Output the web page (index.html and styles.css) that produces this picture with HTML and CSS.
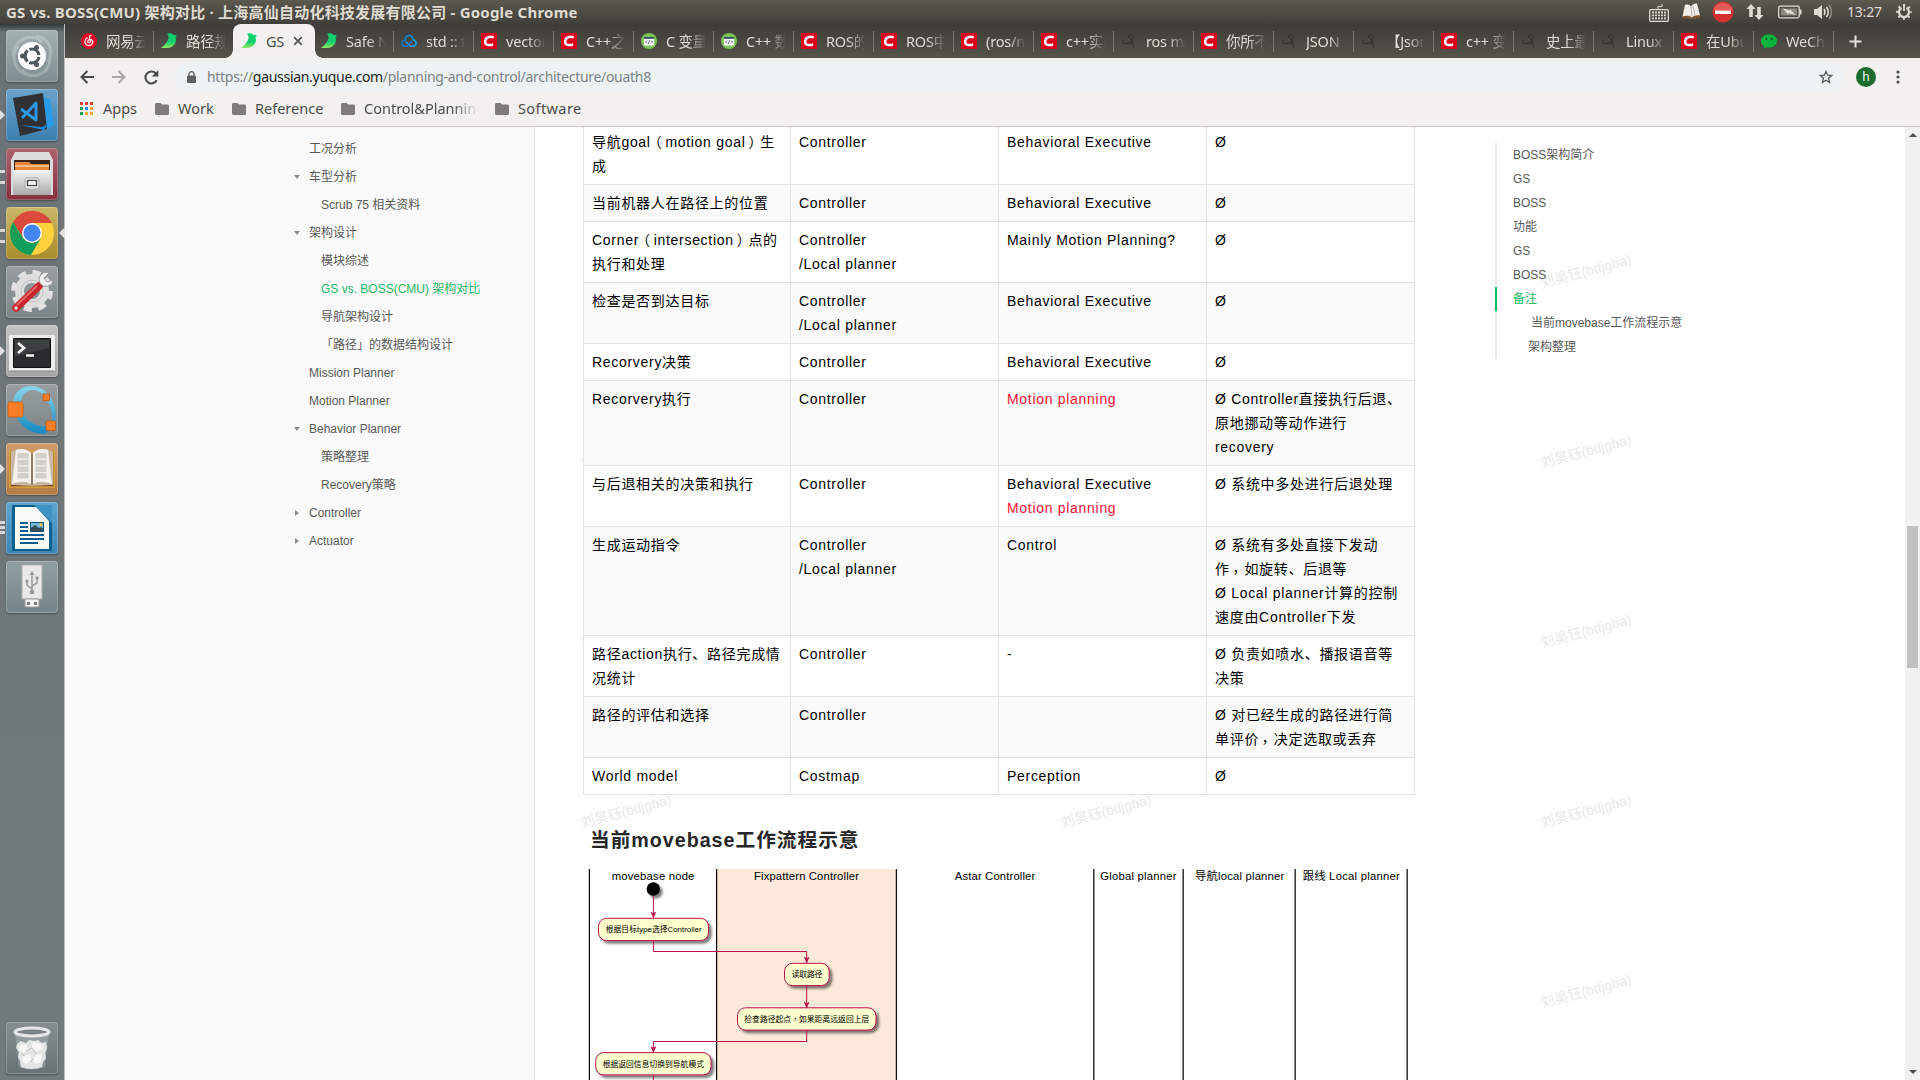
FILE: index.html
```html
<!DOCTYPE html>
<html lang="zh-CN">
<head>
<meta charset="utf-8">
<title>GS vs. BOSS(CMU) 架构对比</title>
<link rel="stylesheet" href="styles.css">
</head>
<body>
<svg class="defs" width="0" height="0">
  <defs>
    <linearGradient id="bird-g" x1="0" y1="0" x2="0" y2="1"><stop offset="0" stop-color="#0bd070"/><stop offset=".6" stop-color="#16cf6e"/><stop offset="1" stop-color="#9ce86a"/></linearGradient>
    <linearGradient id="metal" x1="0" y1="0" x2="0" y2="1"><stop offset="0" stop-color="#f4f4f4"/><stop offset="1" stop-color="#aaa"/></linearGradient>
    <linearGradient id="ring" x1="0" y1="0" x2="0" y2="1"><stop offset="0" stop-color="#8bd6ee"/><stop offset="1" stop-color="#1389c4"/></linearGradient>
    <symbol id="f-bird" viewBox="0 0 16 16"><path fill="url(#bird-g)" d="M6 1C8-.4 11 0 12 1.800l3.800.4-1.300 2.300c1.500 4-1 8.700-5.200 9.900-3 .8-6.300.6-9.300.6C3.500 12 7 8.500 7.600 5 7.800 3.300 7.200 2 6 1z"/></symbol>
    <symbol id="f-netease" viewBox="0 0 16 16"><circle cx="8" cy="8" r="8" fill="#e60026"/><path d="M9.800 2.700C8.500 2.400 8.400 3.500 8.600 4.500l.7 3.600c.3 2-2.500 2.200-2.500.3 0-2 3-2.700 4.400-1 1.700 2.300-.4 5.200-3.200 5.200-2.700 0-4.300-2-4.100-4.300C4 6.500 5 5.400 6.200 4.800" fill="none" stroke="#fff" stroke-width="1.200" stroke-linecap="round"/></symbol>
    <symbol id="f-cloud" viewBox="0 0 16 16"><g fill="none" stroke-width="1.500"><path d="M4.200 7.300C3.700 1.200 12 1 12 7" stroke="#0b8fe8"/><path d="M12 7c4.300.2 4 6.300 0 6.300H9.500L4.800 8.500" stroke="#0aa0f0"/><path d="M4.200 7.300c-4.500.3-4.300 6 0 6h2l5-5.600" stroke="#0a74c8"/></g></symbol>
    <symbol id="f-c" viewBox="0 0 16 16"><path fill="#e0001b" d="M0 0h16v16H0z"/><path d="M12.800 4.300C9 3 4.200 4 4.100 8.600c0 3.700 4.200 4.100 8 2.900" fill="none" stroke="#fff" stroke-width="2.500"/></symbol>
    <symbol id="f-code" viewBox="0 0 16 16"><circle cx="8" cy="8" r="8" fill="#78c257"/><rect x="3" y="4" width="10" height="8.500" rx="1" fill="#fff"/><path fill="#34495e" d="M3 4h10v1.800H3z"/><path d="M6 7.500 4.500 9 6 10.500M10 7.500 11.500 9 10 10.500M8.600 7.300 7.400 10.800" fill="none" stroke="#456" stroke-width=".9"/></symbol>
    <symbol id="f-dark" viewBox="0 0 16 16"><path d="M1.500 6c-1 5 4 5.500 7 3.500 3-2 4.500-6 2.500-8-2-1-4 1.500-2.500 3.500 3 2.500 4 4 4 10M8 9.500c2 1.500 3 0 4 .5" fill="none" stroke="#3a3733" stroke-width="1.200"/></symbol>
    <symbol id="f-wechat" viewBox="0 0 16 16"><path fill="#07b53b" d="M8 1.200c4.600 0 8 2.900 8 6.700s-3.400 6.600-8 6.600c-.9 0-1.700-.1-2.400-.3L2.700 15.800l.6-2.700C1.200 11.900 0 10 0 7.900c0-3.800 3.400-6.700 8-6.700z"/><circle cx="5.300" cy="5.800" r="1.100" fill="#14502a"/><circle cx="10.700" cy="5.800" r="1.100" fill="#14502a"/></symbol>
    <symbol id="folder" viewBox="0 0 14 12"><path fill="#7d7c7b" d="M1.500 0h4l1.600 1.600h5.400c.8 0 1.500.6 1.500 1.400v7.500c0 .8-.7 1.500-1.500 1.500h-11C.7 12 0 11.300 0 10.500v-9C0 .7.700 0 1.500 0z"/></symbol>
  </defs>
</svg>

<header class="titlebar">
  <span class="window-title">GS vs. BOSS(CMU) 架构对比 · 上海高仙自动化科技发展有限公司 - Google Chrome</span>
  <div class="tray">
    <svg class="t-kbd" width="20" height="24" viewBox="0 0 20 24"><path d="M9 9V6.500h4V4" fill="none" stroke="#dfdbd2"/><rect x=".7" y="9.700" width="18.600" height="11.600" rx="1" fill="#4a4843" stroke="#dfdbd2" stroke-width="1.300"/><path d="M3 12.500h14M3 15.300h14M3 18.300h14" stroke="#dfdbd2" stroke-width="1.800" stroke-dasharray="2 1"/></svg>
    <svg class="t-book" width="20" height="18" viewBox="0 0 20 18"><path d="M1 15 3 3l14 1 2 11-8 1z" fill="#80552e"/><path d="M1.500 13.500 4 2c3-1 5 0 6 1.500C11.500 1 14 0 16 .5l3 12c-3-.5-6 0-8 2-2-2-6-2.500-9.500-1z" fill="#f0eee9"/><path d="M10 3.500 11 14M12 3l2 10" stroke="#bdb8b0"/></svg>
    <svg class="t-stop" width="22" height="22" viewBox="0 0 22 22"><circle cx="11" cy="11" r="10.500" fill="#d52f32"/><path d="M1.500 9a10 10 0 0 1 19 0z" fill="#ee7a6a" opacity=".6"/><path d="M3 9.500h16v3.500H3z" fill="#fff"/></svg>
    <svg class="t-net" width="18" height="18" viewBox="0 0 18 18"><path fill="#dfdbd2" d="M5 1l4.500 5H6.800v8H3.200V6H.5zM13 17l4.500-5h-2.700V4h-3.600v8H8.500z"/></svg>
    <svg class="t-bat" width="24" height="14" viewBox="0 0 24 14"><rect x=".7" y="1.200" width="20.500" height="11.600" rx="1.500" fill="none" stroke="#dfdbd2" stroke-width="1.300"/><path fill="#8b8982" d="M3 3.500h16v7H3z"/><path fill="#dfdbd2" d="M22 4.500h1.500v5H22zM5 3.500l7 2V4l5.500 6-7-2v2z"/></svg>
    <svg class="t-vol" width="19" height="16" viewBox="0 0 19 16"><path fill="#dfdbd2" d="M0 5h3l5-4v14l-5-4H0z"/><path d="M10 5q2 3 0 6M12.500 3q3.500 5 0 10" fill="none" stroke="#dfdbd2" stroke-width="1.500"/><path d="M15 1q5 7 0 14" fill="none" stroke="#96938b" stroke-width="1.300"/></svg>
    <span class="clock">13:27</span>
    <svg class="t-gear" width="16" height="18" viewBox="0 0 16 18"><g fill="none" stroke="#dfdbd2"><path d="M5.500 4.700a5 5 0 1 0 5 0" stroke-width="2.200"/><path d="M8 1v7" stroke-width="1.800"/><circle cx="8" cy="9" r="6.800" stroke-width="2" stroke-dasharray="2 3.340" stroke-dashoffset="1"/></g></svg>
  </div>
</header>

<div class="desktop">
  <nav class="launcher">
    <div class="tile t-ubuntu"><svg width="52" height="52" viewBox="0 0 52 52"><g fill="none" stroke="#fff" stroke-opacity=".22" stroke-width="3"><path d="M7 26C8 8 28 2 36 12M26 46C8 44 4 26 12 16M44 30C42 46 24 50 16 40M30 6c14 2 18 16 12 26"/></g><circle cx="26" cy="26" r="14" fill="#fff"/><circle cx="26" cy="26" r="7" fill="none" stroke="#4d565a" stroke-width="3.200" stroke-dasharray="12.600 2" stroke-dashoffset="-1"/><g fill="#4d565a"><circle cx="16.500" cy="26" r="2.500"/><circle cx="30.500" cy="17.500" r="2.500"/><circle cx="30.500" cy="34.500" r="2.500"/></g></svg></div>
    <div class="tile t-code run1"><svg width="52" height="52" viewBox="0 0 52 52"><path fill="#2a9be8" d="M35 8l9 2 4 26-6 4-6-4z"/><path fill="#303134" d="M7 9l30-5 4 36-27 7z"/><path fill="#1d86d6" d="M14 36l22 2 6-3-4 6z"/><path d="M15 20l15 11V14L16 29" fill="none" stroke="#2e95e0" stroke-width="3" stroke-linejoin="round"/></svg></div>
    <div class="tile t-files run2"><svg width="52" height="52" viewBox="0 0 52 52"><path fill="#dcdcdc" d="M9 4h34l4 8v35H5V12z"/><path fill="#3a2418" d="M8 12h36v11H8z"/><path fill="#e8873a" d="M9 14h14l2 2h18v8H9z"/><path d="M9 18h34" stroke="#fff3d0"/><path fill="url(#metal)" d="M7 22h38v25H7z"/><rect x="19" y="30" width="14" height="11" rx="2" fill="#e8e8e8" stroke="#aaa"/><rect x="21.500" y="32.500" width="9" height="5" fill="#fff" stroke="#444" stroke-width="1.300"/></svg></div>
    <div class="tile t-chrome run2 focus"><svg width="52" height="52" viewBox="0 0 52 52"><circle cx="26" cy="26" r="22" fill="#fdd23d"/><path fill="#dc4a3e" d="M26 26V16h20A22 22 0 0 0 7 15l10 16z"/><path fill="#109d58" d="M7 15a22 22 0 0 0 18 33l10-17-9 5-9-5z"/><circle cx="26" cy="26" r="10" fill="#fff"/><circle cx="26" cy="26" r="8.500" fill="#4285f4"/></svg></div>
    <div class="tile t-settings"><svg width="52" height="52" viewBox="0 0 52 52"><circle cx="26" cy="25" r="18.500" fill="none" stroke="#e2e2e2" stroke-width="5" stroke-dasharray="8 6.530"/><circle cx="26" cy="25" r="12.500" fill="none" stroke="#dedede" stroke-width="9"/><circle cx="26" cy="25" r="11" fill="none" stroke="#c2c2c2"/><path d="M36 19l5-5" stroke="#eee" stroke-width="6"/><path d="M10 42 33 20" stroke="#c8262c" stroke-width="7.500" stroke-linecap="round"/><path d="M11 39 31 20" stroke="#e86a68" stroke-width="2"/><path d="M43 7a7 7 0 1 0 4 7l-6 2-3-4z" fill="#f1f1f1" stroke="#999"/><circle cx="10" cy="42" r="1.700" fill="#fff"/></svg></div>
    <div class="tile t-term run1"><svg width="52" height="52" viewBox="0 0 52 52"><path fill="#ececec" d="M3 10h46v36H3z"/><path d="M3.500 46h45" stroke="#888"/><path fill="#282c2d" stroke="#111" d="M7.500 13.500h37v29h-37z"/><path fill="#4a4e4f" d="M9 15h34v8L9 31z" opacity=".6"/><path d="M12 18l6 5-6 5M20 30.500h8" fill="none" stroke="#f4f4f4" stroke-width="2.700"/></svg></div>
    <div class="tile t-octave"><svg width="52" height="52" viewBox="0 0 52 52"><path fill="url(#ring)" fill-rule="evenodd" d="M25 2C11 2 4 15 8 27c5 15 18 25 33 22l3-8C33 45 20 38 16 27 12 15 18 6 27 6c11 1 19 13 20 32h2C53 18 40 2 25 2z"/><g fill="#fb7e28" stroke="#c85a10" stroke-width=".8"><rect x="2" y="18" width="15" height="15" rx="1.500"/><rect x="37" y="10" width="6.500" height="6.500"/><rect x="40" y="37" width="9.500" height="9.500" rx="1"/></g></svg></div>
    <div class="tile t-reader run1"><svg width="52" height="52" viewBox="0 0 52 52"><path fill="#7c2b16" stroke="#d8a83c" stroke-width="1.500" d="M4 9h44v35H4z"/><path fill="#c9b8a4" d="M5 9l7-3 14 5 14-5 7 3v33l-21 1-21-1z"/><path fill="#f4f1ec" d="M10 7c6-2 12-1 16 4v31c-5-4-12-4-20-1zM42 7c-6-2-12-1-16 4v31c5-4 12-4 20-1z"/><path d="M26 11v31" stroke="#8f7d69" stroke-width="2"/><g stroke="#c9c6c2" stroke-opacity=".8"><path d="M17 10v26M35 10v26" stroke-width="11" stroke-dasharray="5.500 1.200"/></g></svg></div>
    <div class="tile t-writer run3"><svg width="52" height="52" viewBox="0 0 52 52"><path fill="#0a5d8f" d="M6 3h40v46H6z"/><path fill="#3f92c4" d="M28 3h18v18z"/><path fill="#fafafa" d="M9 5h21l13 14v28H9z"/><path d="M14 21h8M14 25h8M14 29h8M14 33h24M14 37h24M14 41h18" stroke="#0a5d8f" stroke-width="2"/><path fill="#75b9dc" stroke="#0a4d75" d="M24.500 20.500h13v9h-13z"/><path fill="#374b52" d="M25 29v-3l4-3 4 3 2-1 2 2v2z"/><circle cx="35" cy="22.500" r="1.500" fill="#f1c33a"/></svg></div>
    <div class="tile t-usb"><svg width="52" height="52" viewBox="0 0 52 52"><path fill="#e9e9e9" stroke="#b0b0b0" d="M16 4h20v34H16z"/><path fill="#f6f6f6" stroke="#999" d="M19 38h14v8H19z"/><path fill="#777" d="M21 41h3v3h-3zM28 41h3v3h-3z"/><g fill="none" stroke="#999" stroke-width="1.500"><path d="M26 13v17M26 28l-5-4v-4M26 25l5-3v-4"/></g><path fill="#999" d="M26 10l2.500 4h-5z"/><g fill="#999"><circle cx="26" cy="31" r="2.300"/><circle cx="21" cy="20" r="1.600"/><path d="M29.500 15.500h3v3h-3z"/></g></svg></div>
    <div class="tile t-trash"><svg width="52" height="52" viewBox="0 0 52 52"><path d="M9 10l4 35q13 5 26 0l4-35z" fill="#a3adaf" opacity=".6"/><path fill="#e3e5e4" d="M11 22l4-3 5 2 3-3 6 1 3-1 4 3 4-1 1 6-2 5 1 5-3 4-1 5q-10 4-21 0l-1-6-2-4 1-5-3-4z"/><g fill="#f7f7f6"><path d="M14 22l6 1 3 5-5 3-5-3zM27 20l7 2 3 5-6 2-5-3zM17 34l7-2 2 6-6 4-4-3zM30 33l6-1-1 8-6 2-2-5z"/></g><path d="M20 29l6-3 4 6M24 40l4-4M15 32l4 2" fill="none" stroke="#bcc1c1"/><ellipse cx="26" cy="10" rx="17" ry="4" fill="#7a8385" stroke="#e6e8e8" stroke-width="3"/></svg></div>
  </nav>

  <main class="browser">
    <div class="tabs">
      <div class="tab"><svg class="fav"><use href="#f-netease"/></svg><span>网易云音乐</span></div>
      <div class="tab nosep"><svg class="fav"><use href="#f-bird"/></svg><span>路径规划</span></div>
      <div class="tab active"><svg class="fav"><use href="#f-bird"/></svg><span>GS</span><svg class="close" width="10" height="10" viewBox="0 0 10 10"><path d="M1.200 1.200l7.600 7.600M8.800 1.200 1.200 8.800" stroke="#55554f" stroke-width="1.700"/></svg></div>
      <div class="tab"><svg class="fav"><use href="#f-bird"/></svg><span>Safe Navi</span></div>
      <div class="tab"><svg class="fav"><use href="#f-cloud"/></svg><span>std :: thr</span></div>
      <div class="tab"><svg class="fav"><use href="#f-c"/></svg><span>vector</span></div>
      <div class="tab"><svg class="fav"><use href="#f-c"/></svg><span>C++之</span></div>
      <div class="tab"><svg class="fav"><use href="#f-code"/></svg><span>C 变量类</span></div>
      <div class="tab"><svg class="fav"><use href="#f-code"/></svg><span>C++ 数据</span></div>
      <div class="tab"><svg class="fav"><use href="#f-c"/></svg><span>ROS的</span></div>
      <div class="tab"><svg class="fav"><use href="#f-c"/></svg><span>ROS中</span></div>
      <div class="tab"><svg class="fav"><use href="#f-c"/></svg><span>(ros/nav</span></div>
      <div class="tab"><svg class="fav"><use href="#f-c"/></svg><span>c++实现</span></div>
      <div class="tab"><svg class="fav"><use href="#f-dark"/></svg><span>ros mov</span></div>
      <div class="tab"><svg class="fav"><use href="#f-c"/></svg><span>你所不知</span></div>
      <div class="tab"><svg class="fav"><use href="#f-dark"/></svg><span>JSON</span></div>
      <div class="tab"><svg class="fav"><use href="#f-dark"/></svg><span>【Json】</span></div>
      <div class="tab"><svg class="fav"><use href="#f-c"/></svg><span>c++ 变量</span></div>
      <div class="tab"><svg class="fav"><use href="#f-dark"/></svg><span>史上最全</span></div>
      <div class="tab"><svg class="fav"><use href="#f-dark"/></svg><span>Linux下</span></div>
      <div class="tab"><svg class="fav"><use href="#f-c"/></svg><span>在Ubuntu</span></div>
      <div class="tab"><svg class="fav"><use href="#f-wechat"/></svg><span>WeChat</span></div>
      <svg class="newtab" width="13" height="13" viewBox="0 0 13 13"><path d="M6.500 .5v12M.5 6.500h12" stroke="#e4e2dc" stroke-width="2"/></svg>
    </div>

    <div class="toolbar">
      <svg width="14" height="14" viewBox="0 0 14 14"><path d="M14 7H1.500M7.500 1l-6 6 6 6" fill="none" stroke="#484848" stroke-width="2"/></svg>
      <svg width="14" height="14" viewBox="0 0 14 14"><path d="M0 7h12.500M6.500 1l6 6-6 6" fill="none" stroke="#a9a8a7" stroke-width="2"/></svg>
      <svg width="15" height="15" viewBox="0 0 15 15"><path d="M12.700 10.300A6 6 0 1 1 11.700 3.200L13.200 5" fill="none" stroke="#484848" stroke-width="2"/><path fill="#484848" d="M14.300 0v6.500H7.900z"/></svg>
      <div class="omnibox">
        <svg width="9" height="12" viewBox="0 0 9 12"><rect y="4.500" width="9" height="7.500" rx="1" fill="#5f6063"/><path d="M2 5V3.200a2.500 2.500 0 0 1 5 0V5" fill="none" stroke="#5f6063" stroke-width="1.300"/></svg>
        <span class="url">https://<b>gaussian.yuque.com</b>/planning-and-control/architecture/ouath8</span>
        <svg class="star" width="14" height="14" viewBox="0 0 14 14"><path d="M7 1.500l1.600 3.700 4 .4-3 2.700.9 4L7 10.200l-3.500 2.100.9-4-3-2.700 4-.4z" fill="none" stroke="#55585b" stroke-width="1.300"/></svg>
      </div>
      <span class="avatar">h</span>
      <svg width="4" height="14" viewBox="0 0 4 14"><g fill="#4a4a4a"><circle cx="2" cy="2" r="1.600"/><circle cx="2" cy="7" r="1.600"/><circle cx="2" cy="12" r="1.600"/></g></svg>
    </div>

    <div class="bookmarks">
      <svg class="apps" width="13" height="13" viewBox="0 0 13 13"><path fill="#ea4335" d="M0 0h3v3H0zM5 0h3v3H5zM10 0h3v3h-3z"/><path fill="#0f9d58" d="M0 5h3v3H0zM0 10h3v3H0z"/><path fill="#1a8cf0" d="M5 5h3v3H5z"/><path fill="#fba827" d="M10 5h3v3h-3zM5 10h3v3H5zM10 10h3v3h-3z"/></svg>
      <span class="bm b-apps">Apps</span>
      <svg class="fold"><use href="#folder"/></svg><span class="bm b-work">Work</span>
      <svg class="fold"><use href="#folder"/></svg><span class="bm b-ref">Reference</span>
      <svg class="fold"><use href="#folder"/></svg><span class="bm b-ctl">Control&amp;Planning</span>
      <svg class="fold"><use href="#folder"/></svg><span class="bm b-soft">Software</span>
    </div>

    <div class="page">
      <aside class="sidebar">
        <ul>
          <li>工况分析</li>
          <li class="open">车型分析</li>
          <li class="sub">Scrub 75 相关资料</li>
          <li class="open">架构设计</li>
          <li class="sub">模块综述</li>
          <li class="sub current">GS vs. BOSS(CMU) 架构对比</li>
          <li class="sub">导航架构设计</li>
          <li class="sub">「路径」的数据结构设计</li>
          <li>Mission Planner</li>
          <li>Motion Planner</li>
          <li class="open">Behavior Planner</li>
          <li class="sub">策略整理</li>
          <li class="sub">Recovery策略</li>
          <li class="closed">Controller</li>
          <li class="closed">Actuator</li>
        </ul>
      </aside>

      <section class="content">
        <div class="marks">
          <span></span><span></span><span>刘昊钰(bdjgba)</span>
          <span>刘昊钰(bdjgba)</span><span></span><span>刘昊钰(bdjgba)</span>
          <span>刘昊钰(bdjgba)</span><span></span><span>刘昊钰(bdjgba)</span>
          <span>刘昊钰(bdjgba)</span><span>刘昊钰(bdjgba)</span><span>刘昊钰(bdjgba)</span>
          <span></span><span></span><span>刘昊钰(bdjgba)</span>
        </div>
        <article>
          <table>
            <colgroup><col class="c1"><col><col><col></colgroup>
            <tr><td>导航goal<i class="tc lp" lang="zh-TW">（</i>motion goal<i class="tc rp" lang="zh-TW">）</i>生<br>成</td><td>Controller</td><td>Behavioral Executive</td><td>Ø</td></tr>
            <tr><td>当前机器人在路径上的位置</td><td>Controller</td><td>Behavioral Executive</td><td>Ø</td></tr>
            <tr><td>Corner<i class="tc lp" lang="zh-TW">（</i>intersection<i class="tc rp" lang="zh-TW">）</i>点的<br>执行和处理</td><td>Controller<br>/Local planner</td><td>Mainly Motion Planning?</td><td>Ø</td></tr>
            <tr><td>检查是否到达目标</td><td>Controller<br>/Local planner</td><td>Behavioral Executive</td><td>Ø</td></tr>
            <tr><td>Recorvery决策</td><td>Controller</td><td>Behavioral Executive</td><td>Ø</td></tr>
            <tr><td>Recorvery执行</td><td>Controller</td><td><em>Motion planning</em></td><td>Ø Controller直接执行后退、<br>原地挪动等动作进行<br>recovery</td></tr>
            <tr><td>与后退相关的决策和执行</td><td>Controller</td><td>Behavioral Executive<br><em>Motion planning</em></td><td>Ø 系统中多处进行后退处理</td></tr>
            <tr><td>生成运动指令</td><td>Controller<br>/Local planner</td><td>Control</td><td>Ø 系统有多处直接下发动<br>作<i class="tc comma" lang="zh-TW">，</i>如旋转、后退等<br>Ø Local planner计算的控制<br>速度由Controller下发</td></tr>
            <tr><td>路径action执行、路径完成情<br>况统计</td><td>Controller</td><td>-</td><td>Ø 负责如喷水、播报语音等<br>决策</td></tr>
            <tr><td>路径的评估和选择</td><td>Controller</td><td></td><td>Ø 对已经生成的路径进行简<br>单评价<i class="tc comma" lang="zh-TW">，</i>决定选取或丢弃</td></tr>
            <tr><td>World model</td><td>Costmap</td><td>Perception</td><td>Ø</td></tr>
          </table>
          <h3>当前movebase工作流程示意</h3>
          <svg class="flow" width="820" height="211" viewBox="588 869 820 211">
            <defs>
              <filter id="sh" x="-20%" y="-30%" width="150%" height="190%"><feDropShadow dx="2.700" dy="2.700" stdDeviation="1.300" flood-color="#000" flood-opacity=".5"/></filter>
              <marker id="ar" viewBox="0 0 6 7" refX="3" refY="6.500" markerWidth="6" markerHeight="7" markerUnits="userSpaceOnUse"><path fill="#b8124a" d="M0 0l3 1.800L6 0 3 7z"/></marker>
            </defs>
            <path fill="#fff" d="M588 869h820v211H588z"/>
            <path fill="#fde9d9" d="M716.700 869h179.600v211H716.700z"/>
            <g stroke="#111" stroke-width="1.300"><path d="M589.400 869v211M716.600 869v211M896.400 869v211M1093.800 869v211M1183.200 869v211M1295.200 869v211M1407.200 869v211"/></g>
            <g class="lane">
              <text x="611.700" y="880" textLength="82.700">movebase node</text>
              <text x="754" y="880" textLength="105">Fixpattern Controller</text>
              <text x="954.800" y="880" textLength="80.500">Astar Controller</text>
              <text x="1100.300" y="880" textLength="76.300">Global planner</text>
              <text x="1195" y="880" textLength="89.300">导航local planner</text>
              <text x="1302.700" y="880" textLength="97">跟线 Local planner</text>
            </g>
            <circle cx="653.300" cy="889" r="6.700" filter="url(#sh)"/>
            <g fill="#fefece" stroke="#b8124a" filter="url(#sh)">
              <rect x="598.500" y="918.300" width="110" height="22.300" rx="8"/>
              <rect x="784.500" y="963.300" width="44.700" height="22.300" rx="8"/>
              <rect x="737.500" y="1007.800" width="138.500" height="22.300" rx="8"/>
              <rect x="595.700" y="1052.600" width="115.300" height="22.300" rx="8"/>
            </g>
            <g fill="none" stroke="#b8124a">
              <path marker-end="url(#ar)" d="M653.400 896v22"/>
              <path marker-end="url(#ar)" d="M653.400 941v10.500h153.300V963"/>
              <path marker-end="url(#ar)" d="M806.700 986v22"/>
              <path marker-end="url(#ar)" d="M806.700 1030.500v11H653.400v11"/>
              <path d="M653.400 1075v6"/>
            </g>
            <g class="step">
              <text x="605.700" y="932" textLength="96">根据目标type选择Controller</text>
              <text x="791.700" y="977" textLength="30.700">读取路径</text>
              <text x="744.300" y="1022" textLength="125" class="tc" lang="zh-TW">检查路径起点，如果距离远返回上层</text>
              <text x="602.700" y="1067" textLength="101.300">根据返回信息切换到导航模式</text>
            </g>
          </svg>
        </article>
        <ul class="toc">
          <li>BOSS架构简介</li><li>GS</li><li>BOSS</li><li>功能</li><li>GS</li><li>BOSS</li>
          <li class="on">备注</li><li class="l3">当前movebase工作流程示意</li><li class="l2">架构整理</li>
        </ul>
      </section>

      <div class="scrollbar"><i class="up"></i><i class="thumb"></i><i class="down"></i></div>
    </div>
  </main>
</div>
</body>
</html>
```
FILE: styles.css
```css
* { box-sizing: border-box; }
body {
  margin: 0;
  width: 1920px;
  height: 1080px;
  overflow: hidden;
  display: flex;
  flex-direction: column;
  font-family: "Liberation Sans", "Noto Sans CJK SC", sans-serif;
}
svg { display: block; flex: none; }
ul { list-style: none; margin: 0; padding: 0; }
i, em { font-style: normal; }
.defs { position: absolute; }

/* full-width punctuation sits in the middle of its cell */
.tc { font-family: "Liberation Sans", "Noto Sans CJK TC", sans-serif; }
.lp, .rp, .comma { display: inline-block; line-height: 20px; }
.lp { transform: translateX(-3px); }
.rp { transform: translateX(3px); }
.comma { transform: translate(-1px, 3px); }

/* desktop panel */
.titlebar {
  height: 24px;
  flex: none;
  display: flex;
  align-items: center;
  justify-content: space-between;
  padding: 0 8px 0 6px;
  background: linear-gradient(#5d5b4f 0, #59574e 8%, #403f3a 100%);
  color: #dfdbd2;
  font-family: "Noto Sans", "Noto Sans CJK SC", sans-serif;
}
.window-title { font-size: 15px; font-weight: 700; line-height: 24px; letter-spacing: .22px; white-space: nowrap; }
.tray { display: flex; align-items: center; height: 24px; }
.t-book { margin-left: 12px; }
.t-stop { margin-left: 11px; }
.t-net { margin-left: 12px; }
.t-bat { margin-left: 14px; }
.t-vol { margin-left: 12px; }
.clock { width: 36px; margin: 0 13px 0 14px; font-size: 14px; line-height: 24px; white-space: nowrap; letter-spacing: -.2px; }

.desktop { flex: 1; min-height: 0; display: flex; }

/* launcher */
.launcher {
  width: 65px;
  flex: none;
  display: flex;
  flex-direction: column;
  gap: 7px;
  padding: 6px 0 6px 6px;
  background: linear-gradient(#33393b 0, #6b7376 8px, #737a7d 100%);
  border-right: 1px solid #bcbfc0;
}
.tile {
  position: relative;
  width: 52px;
  height: 52px;
  border-radius: 4px;
  flex: none;
  background: linear-gradient(#999fa1, #7b8487);
  box-shadow: inset 0 0 0 1px rgba(255,255,255,.22), 0 1px 2px rgba(0,0,0,.35);
}
.t-ubuntu { background: linear-gradient(#a5b0b3, #7f8c90); }
.t-code { background: linear-gradient(#6aa3cb, #3b7fae); }
.t-files { background: linear-gradient(#ab6470, #84303f); }
.t-chrome { background: linear-gradient(#c9b868, #a98c2b); }
.t-term { background: linear-gradient(#c3c3c3, #a5a5a5); }
.t-reader { background: linear-gradient(#cf9c6b, #b57d42); }
.t-writer { background: linear-gradient(#5da5cd, #3a88b4); }
.t-usb { background: linear-gradient(#929ea2, #75848a); }
.t-trash { margin-top: auto; background: linear-gradient(#858d8f, #687275); }
.run1::before, .run2::before, .run3::before { content: ""; position: absolute; left: -6px; top: 21px; }
.run1::before { border: 5px solid transparent; border-left-color: #e0e0e0; border-right: 0; }
.run2::before { width: 5px; height: 8px; top: 22px; border: solid #d6d6d6; border-width: 3px 0; }
.run3::before { width: 5px; height: 13px; top: 19px; background: repeating-linear-gradient(#d6d6d6 0 3px, transparent 3px 5px); }
.focus::after { content: ""; position: absolute; right: -7px; top: 20px; border: 6px solid transparent; border-right-color: #e0e0e0; border-left: 0; }

/* browser chrome */
.browser { flex: 1; min-width: 0; display: flex; flex-direction: column; background: #f2f1f0; }
.tabs {
  height: 34px;
  flex: none;
  display: flex;
  padding-left: 9px;
  background: linear-gradient(#3d3c38, #55534b);
  font: 14.500px/34px "Noto Sans", "Noto Sans CJK SC", sans-serif;
  color: #dfdcd5;
}
.tab { position: relative; width: 80px; flex: none; display: flex; align-items: center; padding-left: 7px; }
.tab::after { content: ""; position: absolute; right: 0; top: 7px; height: 21px; width: 1px; background: #77756e; }
.nosep::after, .active::after { display: none; }
.fav { width: 16px; height: 16px; margin-right: 9px; }
.tab span {
  width: 40px;
  overflow: hidden;
  white-space: nowrap;
  letter-spacing: -.2px;
  -webkit-mask-image: linear-gradient(90deg, #000 55%, transparent 100%);
  mask-image: linear-gradient(90deg, #000 55%, transparent 100%);
}
.tab.active { width: 82px; margin: 0 -1px; padding-left: 8px; background: #f2f1f0; border-radius: 8px 8px 0 0; color: #4c4c48; z-index: 1; }
.tab.active span { width: 27px; -webkit-mask: none; mask: none; }
.tab.active::before, .tab.active::after {
  content: "";
  display: block;
  position: absolute;
  top: auto;
  bottom: 0;
  width: 8px;
  height: 8px;
}
.tab.active::before { left: -8px; background: radial-gradient(circle at 0 0, transparent 7.500px, #f2f1f0 8px); }
.tab.active::after { right: -8px; background: radial-gradient(circle at 100% 0, transparent 7.500px, #f2f1f0 8px); }
.newtab { margin: 11px 0 0 15px; }

.toolbar { height: 38px; flex: none; display: flex; align-items: center; padding: 0 20px 0 15px; }
.toolbar > svg { margin-right: 18px; }
.toolbar > svg:nth-of-type(3) { margin-right: 16px; }
.toolbar > svg:last-child { margin: 0; }
.omnibox {
  flex: 1;
  height: 28px;
  margin-right: 13px;
  display: flex;
  align-items: center;
  padding: 0 10px 0 12px;
  border-radius: 14px;
  background: #edf2f4;
  font: 14px/28px "Noto Sans", sans-serif;
  color: #7b8388;
}
.url { margin-left: 11px; white-space: nowrap; letter-spacing: -.3px; }
.url b { font-weight: 400; color: #222; }
.star { margin-left: auto; }
.avatar {
  width: 20px;
  height: 20px;
  margin-right: 20px;
  border-radius: 50%;
  background: #1e6b30;
  color: #fff;
  font: 12px/19px "Noto Sans", sans-serif;
  text-align: center;
}
.bookmarks {
  height: 31px;
  flex: none;
  display: flex;
  align-items: center;
  padding: 0 0 5px 15px;
  border-bottom: 1px solid #c9c7c5;
  font: 14.500px/24px "Noto Sans", sans-serif;
  color: #4c4c4c;
}
.apps { margin-right: 10px; }
.fold { width: 14px; height: 12px; margin-right: 9px; }
.bm { white-space: nowrap; margin-top: -1px; }
.b-apps { width: 52px; }
.b-work { width: 54px; }
.b-ref { width: 86px; }
.b-ctl { width: 114px; margin-right: 17px; overflow: hidden; -webkit-mask-image: linear-gradient(90deg, #000 78%, transparent); mask-image: linear-gradient(90deg, #000 78%, transparent); }
.b-soft { letter-spacing: .4px; }

/* document */
.page { flex: 1; min-height: 0; display: flex; overflow: hidden; background: #fff; }
.sidebar { width: 470px; flex: none; padding: 8px 0 0 244px; background: #fafafa; border-right: 1px solid #e8e8e8; }
.sidebar li { height: 28px; line-height: 28px; font-size: 12px; color: #595959; white-space: nowrap; position: relative; }
.sidebar .sub { padding-left: 12px; }
.sidebar .current { color: #25b864; }
.open::before, .closed::before { content: ""; position: absolute; border: 3px solid transparent; }
.open::before { left: -15px; top: 12px; border-top: 4px solid #8c8c8c; border-bottom: 0; }
.closed::before { left: -14px; top: 11px; border-left: 4px solid #8c8c8c; border-right: 0; }

.content { flex: 1; min-width: 0; position: relative; display: flex; align-items: flex-start; padding-left: 48px; overflow: hidden; }
.marks {
  position: absolute;
  left: -149px;
  top: 53px;
  display: grid;
  grid-template-columns: repeat(3, 480px);
  grid-auto-rows: 180px;
  place-items: center;
  font-size: 14px;
  color: #e9e9e9;
}
.marks span { transform: rotate(-15deg); }
article { position: relative; width: 832px; flex: none; margin-top: -4px; }
table { width: 832px; table-layout: fixed; border-collapse: collapse; background: #fff; }
.c1 { width: 207px; }
td {
  border: 1px solid #e4e4e4;
  padding: 6px 0 6px 8px;
  vertical-align: top;
  font-size: 14px;
  line-height: 24px;
  letter-spacing: .7px;
  color: #000;
  white-space: nowrap;
}
tr:nth-child(even) { background: #fafafa; }
em { color: #fa0f35; }
h3 { margin: 30px 0 14px 7px; font-size: 19.700px; line-height: 30px; letter-spacing: .98px; color: #262626; }
.flow { margin-left: 5px; }
.lane { font-size: 11.300px; }
.step { font-size: 7.800px; }

.toc { position: relative; margin: 16px 0 0 80px; }
.toc li { height: 24px; line-height: 24px; padding-left: 16px; border-left: 2px solid #e8e8e8; font-size: 12px; color: #595959; white-space: nowrap; }
.toc .on { color: #25b864; border-color: #07b56b; }
.toc .l2 { padding-left: 31px; }
.toc .l3 { padding-left: 34px; }

.scrollbar { width: 15px; flex: none; display: flex; flex-direction: column; align-items: center; background: #f1f1f1; }
.up { border: 4px solid transparent; border-top: 0; border-bottom-color: #505050; margin-top: 6px; }
.thumb { width: 11px; height: 142px; margin-top: 389px; background: #c1c1c1; }
.down { border: 4px solid transparent; border-bottom: 0; border-top-color: #505050; margin: auto 0 6px; }
```
